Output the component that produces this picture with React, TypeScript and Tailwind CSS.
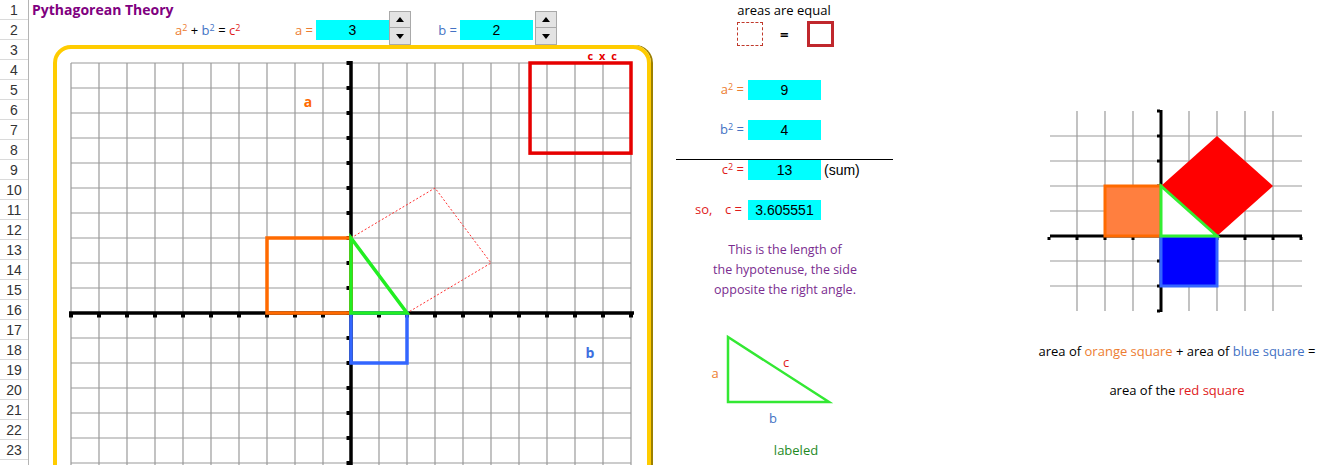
import React, { useState } from "react";

const comic = "font-['Comic_Sans_MS','Open_Sans',sans-serif]";
const sheet = "font-['Liberation_Sans',Arial,sans-serif]";

const Spinner = ({ onUp, onDown }: { onUp: () => void; onDown: () => void }) => (
  <div className="flex flex-col w-[22px] h-[34px] -mt-[9px] shrink-0">
    <button
      onClick={onUp}
      className="h-[17px] bg-[#e3e3e3] border border-[#a9a9a9] flex items-center justify-center"
    >
      <svg width="8" height="5" viewBox="0 0 8 5">
        <path d="M0 5 L4 0 L8 5 Z" fill="#000" />
      </svg>
    </button>
    <button
      onClick={onDown}
      className="h-[17px] bg-[#e3e3e3] border border-t-0 border-[#a9a9a9] flex items-center justify-center"
    >
      <svg width="8" height="5" viewBox="0 0 8 5">
        <path d="M0 0 L4 5 L8 0 Z" fill="#000" />
      </svg>
    </button>
  </div>
);

const Cell = ({ children }: { children: React.ReactNode }) => (
  <div
    className={`w-[73px] h-[20px] bg-[#00ffff] text-center text-[14px] leading-[20px] text-black shrink-0 ${sheet}`}
  >
    {children}
  </div>
);

// big chart, coordinates inside the yellow frame
const BigChart = ({ a, b }: { a: number; b: number }) => {
  const c = Math.sqrt(a * a + b * b);
  const px = (u: number) => 294 + 28 * u;
  const py = (v: number) => 264 - 25 * v;
  const cols = Array.from({ length: 21 }, (_, i) => i - 10);
  const rows = Array.from({ length: 21 }, (_, i) => 10 - i);
  return (
    <svg width="590" height="432" className="block">
      {cols.map((u) => (
        <line key={"v" + u} x1={px(u)} y1={14} x2={px(u)} y2={620} stroke="#9a9a9a" strokeWidth="1.2" />
      ))}
      {rows.map((v) => (
        <line key={"h" + v} x1={14} y1={py(v)} x2={574} y2={py(v)} stroke="#9a9a9a" strokeWidth="1.2" />
      ))}
      {/* axes */}
      <line x1={294} y1={12} x2={294} y2={620} stroke="#000" strokeWidth="3.5" />
      <line x1={12} y1={264} x2={577} y2={264} stroke="#000" strokeWidth="3.5" />
      {cols.map((u) => (
        <rect key={"tx" + u} x={px(u) - 2} y={265} width={4} height={3.5} fill="#000" />
      ))}
      {rows.map((v) => (
        <rect key={"ty" + v} x={289.5} y={py(v) - 2} width={4} height={4} fill="#000" />
      ))}
      {/* squares */}
      <rect x={px(-a)} y={py(a)} width={28 * a} height={25 * a} fill="none" stroke="#ff6a00" strokeWidth="3.5" />
      <rect x={px(0)} y={py(0)} width={28 * b} height={25 * b} fill="none" stroke="#3366ff" strokeWidth="3.5" />
      <polygon
        points={`${px(0)},${py(a)} ${px(a)},${py(a + b)} ${px(a + b)},${py(b)} ${px(b)},${py(0)}`}
        fill="none"
        stroke="#ff3030"
        strokeWidth="1"
        strokeDasharray="2 2"
      />
      <polygon
        points={`${px(0)},${py(a)} ${px(0)},${py(0)} ${px(b)},${py(0)}`}
        fill="none"
        stroke="#22ee22"
        strokeWidth="3.5"
      />
      <rect
        x={px(10 - c)}
        y={py(10)}
        width={28 * c}
        height={25 * c}
        fill="none"
        stroke="#e60000"
        strokeWidth="3.5"
      />
      <text x={546} y={11} textAnchor="middle" fill="#e60000" fontSize="11" fontWeight="bold" letterSpacing="1.5" fontFamily="'Open Sans', sans-serif">
        c x c
      </text>
      <text x={251} y={58} textAnchor="middle" fill="#ff6a00" fontSize="14" fontWeight="bold" fontFamily="'Open Sans', sans-serif">
        a
      </text>
      <text x={533} y={309} textAnchor="middle" fill="#3d6fe0" fontSize="14" fontWeight="bold" fontFamily="'Open Sans', sans-serif">
        b
      </text>
    </svg>
  );
};

// small illustration on the right
const SmallChart = () => {
  const px = (u: number) => 121 + 28 * u;
  const py = (v: number) => 131 - 25 * v;
  const us = [-3, -2, -1, 1, 2, 3, 4];
  const vs = [4, 3, 2, 1, -1, -2];
  return (
    <svg width="270" height="210" className="block">
      {us.map((u) => (
        <line key={"v" + u} x1={px(u)} y1={6} x2={px(u)} y2={206} stroke="#9a9a9a" strokeWidth="1.2" />
      ))}
      {vs.map((v) => (
        <line key={"h" + v} x1={10} y1={py(v)} x2={262} y2={py(v)} stroke="#9a9a9a" strokeWidth="1.2" />
      ))}
      <line x1={121} y1={5} x2={121} y2={207} stroke="#000" strokeWidth="3" />
      <line x1={10} y1={131} x2={262} y2={131} stroke="#000" strokeWidth="3" />
      {[-4, -3, -2, -1, 1, 2, 3, 4, 5].map((u) => (
        <rect key={"tx" + u} x={px(u) - 1.5} y={132} width={3} height={3} fill="#000" />
      ))}
      {[5, 4, 3, 2, 1, -1, -2, -3].map((v) => (
        <rect key={"ty" + v} x={117} y={py(v) - 1.5} width={3} height={3} fill="#000" />
      ))}
      <polygon
        points={`${px(0)},${py(2)} ${px(2)},${py(4)} ${px(4)},${py(2)} ${px(2)},${py(0)}`}
        fill="#ff0000"
      />
      <rect x={px(-2)} y={py(2)} width={56} height={50} fill="#ff7f3f" stroke="#ff6a00" strokeWidth="3" />
      <rect x={px(0)} y={py(0)} width={56} height={50} fill="#0000ff" stroke="#3366ff" strokeWidth="3" />
      <polygon
        points={`${px(0)},${py(2)} ${px(0)},${py(0)} ${px(2)},${py(0)}`}
        fill="#fff"
        stroke="#33ee33"
        strokeWidth="3"
      />
    </svg>
  );
};

const App = () => {
  const [a, setA] = useState(3);
  const [b, setB] = useState(2);
  const c2 = a * a + b * b;
  const c = Math.sqrt(c2);
  const cText = Number.isInteger(c) ? String(c) : c.toFixed(6);
  const clamp = (n: number) => Math.max(1, Math.min(9, n));

  return (
    <div className="w-[1340px] h-[465px] overflow-hidden bg-white flex">
      {/* row headers */}
      <div className={`w-[29px] shrink-0 border-r border-[#b4b4b4] flex flex-col ${sheet}`}>
        {Array.from({ length: 23 }, (_, i) => (
          <div
            key={i}
            className="h-[20px] shrink-0 border-b border-[#dadada] text-center text-[14px] leading-[20px] text-[#333]"
          >
            {i + 1}
          </div>
        ))}
      </div>

      {/* left block: title, inputs, chart */}
      <div className={`w-[631px] shrink-0 flex flex-col ${comic}`}>
        <div className="h-[20px] pl-[3px] text-[14px] leading-[20px] font-bold text-[#800080]">
          Pythagorean Theory
        </div>
        <div className="h-[20px] flex items-start pl-[146px] text-[13px] leading-[20px]">
          <span className="w-[118px] shrink-0">
            <span className="text-[#ed7d31]">
              a<sup className="text-[9px]">2</sup>
            </span>{" "}
            +{" "}
            <span className="text-[#4472c4]">
              b<sup className="text-[9px]">2</sup>
            </span>{" "}
            ={" "}
            <span className="text-[#e01b1b]">
              c<sup className="text-[9px]">2</sup>
            </span>
          </span>
          <span className="w-[23px] pr-[3px] text-right text-[#ed7d31] shrink-0 whitespace-nowrap">a =</span>
          <Cell>{a}</Cell>
          <Spinner onUp={() => setA(clamp(a + 1))} onDown={() => setA(clamp(a - 1))} />
          <span className="w-[49px] pr-[3px] text-right text-[#4472c4] shrink-0">b =</span>
          <Cell>{b}</Cell>
          <div className="ml-[2px]">
            <Spinner onUp={() => setB(clamp(b + 1))} onDown={() => setB(clamp(b - 1))} />
          </div>
        </div>
        <div className="ml-[24px] mt-[5px] w-[598px] h-[440px] shrink-0 border-4 border-[#ffcc00] rounded-[18px] shadow-[2px_0_0_#9c8000]">
          <BigChart a={a} b={b} />
        </div>
      </div>

      {/* middle block: the sums */}
      <div className={`w-[240px] shrink-0 flex flex-col text-[13px] ${comic}`}>
        <div className="h-[20px] pl-[8px] text-center leading-[20px] text-black">areas are equal</div>
        <div className="mt-[1px] h-[26px] flex items-center pl-[77px]">
          <div className="w-[26px] h-[24px] border-[1.5px] border-dashed border-[#c0392b]" />
          <span className="ml-[17px] text-[15px] font-bold">=</span>
          <div className="ml-[18px] w-[27px] h-[26px] border-[3px] border-[#c0282d]" />
        </div>

        <div className="mt-[33px] h-[20px] flex items-center">
          <span className="w-[88px] pr-[4px] text-right text-[#ed7d31]">
            a<sup className="text-[9px]">2</sup> =
          </span>
          <Cell>{a * a}</Cell>
        </div>
        <div className="mt-[20px] h-[20px] flex items-center">
          <span className="w-[88px] pr-[4px] text-right text-[#4472c4]">
            b<sup className="text-[9px]">2</sup> =
          </span>
          <Cell>{b * b}</Cell>
        </div>
        <div className="mt-[19px] ml-[16px] w-[217px] h-px bg-black" />
        <div className="h-[20px] flex items-center">
          <span className="w-[88px] pr-[4px] text-right text-[#e01b1b]">
            c<sup className="text-[9px]">2</sup> =
          </span>
          <Cell>{c2}</Cell>
          <span className={`ml-[3px] text-[14px] ${sheet}`}>(sum)</span>
        </div>
        <div className="mt-[20px] h-[20px] flex items-center">
          <span className="w-[88px] pr-[6px] flex text-[#e01b1b]">
            <span className="ml-[35px]">so,</span>
            <span className="ml-auto">c =</span>
          </span>
          <Cell>{cText}</Cell>
        </div>
        <div className="mt-[20px] pl-[10px] text-center leading-[20px] text-[12.5px] text-[#7a2c8f]">
          This is the length of
          <br />
          the hypotenuse, the side
          <br />
          opposite the right angle.
        </div>
        <svg width="240" height="100" className="mt-[30px] block">
          <polygon points="68,7 68,72 169,72" fill="none" stroke="#33e833" strokeWidth="2.5" />
          <text x="55" y="48" textAnchor="middle" fill="#ed7d31" fontSize="13" fontFamily="'Open Sans', sans-serif">
            a
          </text>
          <text x="126" y="37" textAnchor="middle" fill="#e01b1b" fontSize="13" fontFamily="'Open Sans', sans-serif">
            c
          </text>
          <text x="113" y="93" textAnchor="middle" fill="#4472c4" fontSize="13" fontFamily="'Open Sans', sans-serif">
            b
          </text>
        </svg>
        <div className="mt-[10px] h-[20px] pl-[32px] text-center leading-[20px] text-[#1e8a1e]">labeled</div>
      </div>

      <div className="w-[130px] shrink-0" />

      {/* right block: picture proof */}
      <div className={`w-[310px] shrink-0 flex flex-col text-[13px] ${comic}`}>
        <div className="mt-[105px] ml-[10px]">
          <SmallChart />
        </div>
        <div className="mt-[26px] w-[294px] h-[20px] text-center leading-[20px] text-black whitespace-nowrap">
          area of <span className="text-[#ed7d31]">orange square</span> + area of{" "}
          <span className="text-[#4472c4]">blue square</span> =
        </div>
        <div className="mt-[19px] w-[294px] h-[20px] text-center leading-[20px] text-black">
          area of the <span className="text-[#e01b1b]">red square</span>
        </div>
      </div>
    </div>
  );
};

export default App;
